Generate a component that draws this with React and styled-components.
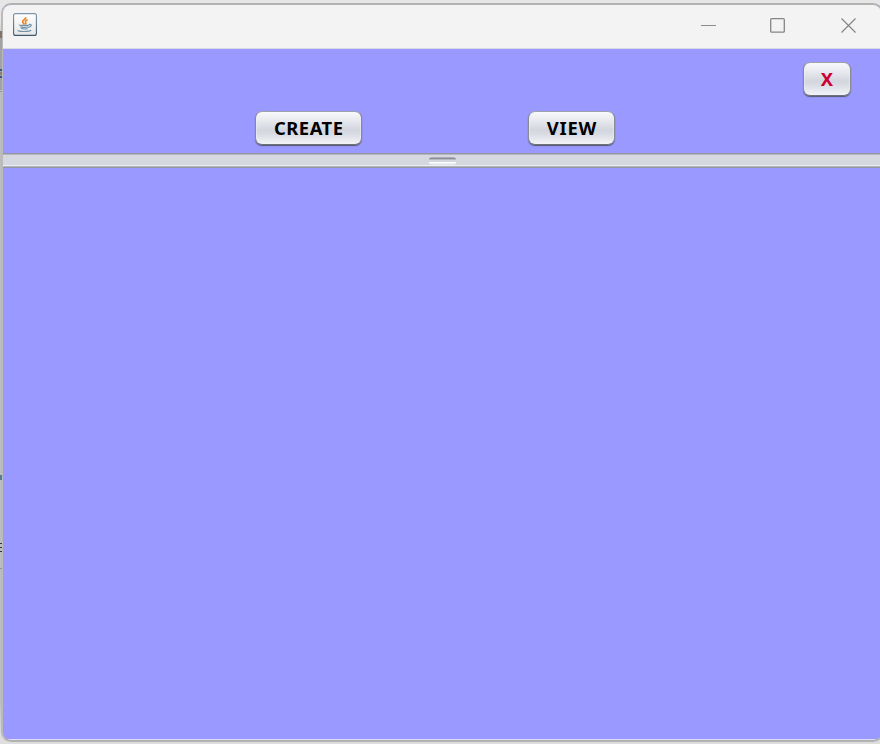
import React from "react";
import styled, { createGlobalStyle } from "styled-components";

const GlobalStyle = createGlobalStyle`
  * { box-sizing: border-box; }
  body { margin: 0; overflow: hidden; background: #e4e4e4; }
`;

const Desktop = styled.div`
  position: relative;
  width: 880px;
  height: 744px;
  overflow: hidden;
  padding: 3px 0 0 1px;
  background: linear-gradient(#e6e6e6 0 20px, #bdbdbd 40px 700px, #dedede 735px);
`;

const BackdropMark = styled.span`
  position: absolute;
  left: 0;
  top: ${(p) => p.$top}px;
  width: 2px;
  height: ${(p) => p.$height}px;
  background: ${(p) => p.$color};
`;

const Window = styled.div`
  display: flex;
  flex-direction: column;
  width: 882px;
  height: 739px;
  border: 2px solid #b2b2b2;
  border-left-color: #bababa;
  border-radius: 10px;
  overflow: hidden;
  background: #9999ff;
`;

const TitleBar = styled.header`
  display: flex;
  align-items: flex-start;
  flex: 0 0 44px;
  padding: 8px 24px 0 10px;
  background: #f3f3f3;
  border-bottom: 1px solid #d9d9e1;
`;

const WindowControls = styled.div`
  display: flex;
  gap: 53px;
  margin-left: auto;
  padding-top: 4px;
`;

const TopPane = styled.section`
  flex: 0 0 104px;
  display: flex;
  flex-direction: column;
`;

const CloseRow = styled.div`
  display: flex;
  justify-content: flex-end;
  padding: 13px 30px 0 0;
`;

const ActionRow = styled.div`
  display: flex;
  gap: 166px;
  padding: 15px 0 0 252px;
`;

const MetalButton = styled.button`
  width: ${(p) => p.$width}px;
  height: 34px;
  padding: 0 0 1px;
  border: 1px solid;
  border-color: #a0a2aa #888b94 #6e7179 #888b94;
  border-radius: 7px;
  background: linear-gradient(#f8f9fb 0%, #e7e9ee 28%, #d3d6de 56%, #d8dbe2 68%, #f2f4f8 100%);
  box-shadow: 0 1px 1px #55596b, inset 1px 0 0 #f2f3f777, inset -1px 0 0 #f2f3f777;
  color: ${(p) => p.$color || "#000"};
  font: 700 18.4px/30px "Noto Sans", "Open Sans", sans-serif;
  letter-spacing: ${(p) => p.$spacing || 0}px;
  text-indent: ${(p) => p.$spacing || 0}px;
  text-align: center;
  white-space: nowrap;
`;

const Divider = styled.div`
  display: flex;
  justify-content: center;
  flex: 0 0 15px;
  padding: 3px 0 0 1px;
  border-top: 1px solid #9496a0;
  border-bottom: 1px solid #9496a0;
  background: linear-gradient(#b5b7c0 0 1px, #d6d8e0 1px 11px, #eceef3 11px 12px, #b3b5be 12px);
`;

const Grip = styled.span`
  width: 27px;
  height: 8px;
  border-radius: 3px;
  background: linear-gradient(#a9abb4 0 1px, #8e9099 1px 2px, #b6b8c2 2px 3px, #d5d7df 3px 5px, #fff 5px 6px, #f0f1f5 6px 7px, #e2e4ea 7px);
`;

const BottomPane = styled.main`
  flex: 1;
  border-bottom: 1px solid #dcdcf6;
`;

function JavaIcon() {
  return (
    <svg width="24" height="24" viewBox="0 0 24 24" fill="none">
      <defs>
        <linearGradient id="tile" x1="0" y1="0" x2="0" y2="1">
          <stop offset="0" stopColor="#fff" />
          <stop offset="1" stopColor="#e4e6e8" />
        </linearGradient>
        <linearGradient id="edge" x1="0" y1="0" x2="0" y2="1">
          <stop offset="0" stopColor="#7f97aa" />
          <stop offset="1" stopColor="#405a6d" />
        </linearGradient>
      </defs>
      <rect x=".6" y=".6" width="22.8" height="21.8" rx="2" fill="url(#tile)" stroke="url(#edge)" strokeWidth="1.1" />
      <path d="M12.8 4.2c.5 2.4-3.6 2.6-3.2 4.6.2 1 1.4 1.5 1.6 2.8M14.7 6.7c-2 .8-2.8 1.5-2 2.7.4.7.1 1.4-.5 2" stroke="#ef8520" strokeWidth="1.6" />
      <path d="M6.4 11.7c-1 .9 8.9 1.1 9.9.1M7.2 13.6c.7 1 6.5 1 8 .2M8.2 15.3c1 .9 4.9.9 6.3.1M16 11.4c3.3-.5 2.9 2.2-.7 3M5.2 17.2c-1.3 1.6 10.8 1.8 13 .1" stroke="#6f8fa8" strokeWidth="1.2" />
    </svg>
  );
}

export default function App() {
  return (
    <Desktop>
      <GlobalStyle />
      <BackdropMark $top={31} $height={7} $color="#85726b" />
      <BackdropMark $top={38} $height={52} $color="#a2a2a4" />
      <BackdropMark $top={69} $height={2} $color="#37568d" />
      <BackdropMark $top={72} $height={3} $color="#8f806d" />
      <BackdropMark $top={76} $height={2} $color="#37568d" />
      <BackdropMark $top={91} $height={1} $color="#929292" />
      <BackdropMark $top={475} $height={5} $color="#537b9b" />
      <BackdropMark $top={543} $height={1} $color="#333" />
      <BackdropMark $top={547} $height={1} $color="#333" />
      <BackdropMark $top={551} $height={1} $color="#333" />
      <BackdropMark $top={568} $height={1} $color="#929292" />
      <Window>
        <TitleBar>
          <JavaIcon />
          <WindowControls>
            <svg width="17" height="17" viewBox="0 0 17 17" fill="none" stroke="#8b8b8b">
              <path d="M1 8.5h15" />
            </svg>
            <svg width="17" height="17" viewBox="0 0 17 17" fill="none" stroke="#858585" strokeWidth="1.3">
              <rect x=".7" y="1.6" width="13.6" height="13.6" rx="1" />
            </svg>
            <svg width="17" height="17" viewBox="0 0 17 17" fill="none" stroke="#858585" strokeWidth="1.2">
              <path d="M1.5 1.5l14 14M15.5 1.5l-14 14" />
            </svg>
          </WindowControls>
        </TitleBar>
        <TopPane>
          <CloseRow>
            <MetalButton $width={48} $color="#cc0033">X</MetalButton>
          </CloseRow>
          <ActionRow>
            <MetalButton $width={107} $spacing={0.5}>CREATE</MetalButton>
            <MetalButton $width={87} $spacing={0.8}>VIEW</MetalButton>
          </ActionRow>
        </TopPane>
        <Divider>
          <Grip />
        </Divider>
        <BottomPane />
      </Window>
    </Desktop>
  );
}
